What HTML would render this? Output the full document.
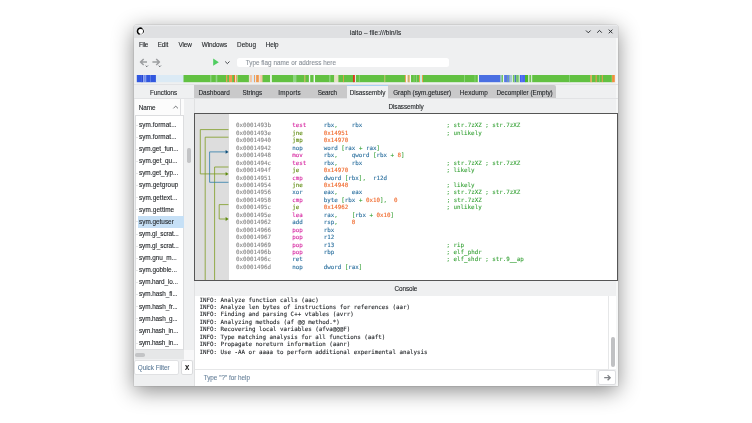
<!DOCTYPE html>
<html lang="en"><head><meta charset="utf-8"><title>iaito – file:///bin/ls</title>
<style>
html,body{margin:0;padding:0;background:#fff}
body{width:752px;height:423px;overflow:hidden;position:relative;font-family:"Liberation Sans",sans-serif}
.win{position:absolute;left:134px;top:25px;width:484px;height:361px;background:#eff0f1;border-radius:2px 2px 0 0;box-shadow:0 5px 21px rgba(0,0,0,.46),0 0 0 .5px rgba(0,0,0,.13)}
#root{position:absolute;left:0;top:0;width:752px;height:423px;will-change:transform}
.b{position:absolute;display:block}
.u{position:absolute;white-space:pre;line-height:1;font-family:"Liberation Sans",sans-serif;-webkit-text-stroke:.1px currentColor}
.m{position:absolute;white-space:pre;line-height:1;font-family:"DejaVu Sans Mono","Liberation Mono",monospace;font-size:5.84px;-webkit-text-stroke:.1px currentColor}
.s{position:absolute;display:block;top:75px;height:7.3px}
</style></head>
<body>
<div id="root">
<div class="win"></div>
<div class="b" style="left:134.00px;top:25.00px;width:484.00px;height:13.00px;background:linear-gradient(#e9eaec 0,#e9eaec 1px,#dfe0e2 1.6px);border-radius:2px 2px 0 0"></div>
<div class="b" style="left:616.00px;top:38.00px;width:2.00px;height:348.00px;background:#f6f7f7"></div>
<svg class="b" style="left:136px;top:27px" width="9" height="9" viewBox="0 0 9 9" fill="none"><circle cx="4.5" cy="4.2" r="3.9" fill="#f3f3f4"/><circle cx="4.5" cy="4.2" r="3" fill="#fff"/><path d="M6.03 1.56 A3.05 3.05 0 0 1 6.66 6.36" stroke="#111" stroke-width="0.95"/><path d="M6.66 6.36 A3.05 3.05 0 0 1 3.71 7.15" stroke="#777" stroke-width="0.6"/><path d="M6.03 1.56 A3.05 3.05 0 1 0 3.71 7.15" stroke="#050505" stroke-width="1.55"/></svg>
<div class="u" style="left:349.90px;top:30px;font-size:6.35px;letter-spacing:0.127px;color:#232629;">iaito – file:///bin/ls</div>
<svg class="b" style="left:583px;top:27px" width="34" height="10" viewBox="0 0 34 10" fill="none" stroke="#26292c" stroke-width="0.95"><path d="M3 3.5 L5.3 5.8 L7.6 3.5"/><path d="M14.2 5.7 L16.5 3.4 L18.8 5.7"/><path d="M25.75 2.6 L29.45 6.3 M29.45 2.6 L25.75 6.3"/></svg>
<div class="u" style="left:138.90px;top:42px;font-size:6.35px;letter-spacing:-0.258px;color:#232629;">File</div>
<div class="u" style="left:157.70px;top:42px;font-size:6.35px;letter-spacing:-0.086px;color:#232629;">Edit</div>
<div class="u" style="left:178.50px;top:42px;font-size:6.35px;letter-spacing:-0.112px;color:#232629;">View</div>
<div class="u" style="left:201.70px;top:42px;font-size:6.35px;letter-spacing:-0.037px;color:#232629;">Windows</div>
<div class="u" style="left:237.00px;top:42px;font-size:6.35px;letter-spacing:0.058px;color:#232629;">Debug</div>
<div class="u" style="left:265.70px;top:42px;font-size:6.35px;letter-spacing:-0.065px;color:#232629;">Help</div>
<svg class="b" style="left:137px;top:56px" width="100" height="14" viewBox="0 0 100 14" fill="none"><g stroke="#9c9ea0" stroke-width="1.55" stroke-linejoin="round"><path d="M3.6 6 H10 M6.7 3 L3.5 6 L6.7 9"/><path d="M15.4 6 H22.3 M19.2 3 L22.4 6 L19.2 9"/></g><g stroke="#3f4347" stroke-width="0.8"><path d="M8.7 9.6 L9.8 10.7 L10.9 9.6"/><path d="M21.7 9.6 L22.8 10.7 L23.9 9.6"/></g><path d="M76.2 2.6 L81.8 6.2 L76.2 9.8 Z" fill="#4fcd60"/><path d="M88.2 5.5 L90.35 7.65 L92.5 5.5" stroke="#3c4044" stroke-width="0.95"/></svg>
<div class="b" style="left:237.00px;top:57.50px;width:212.00px;height:9.50px;background:#fff;border-radius:2.5px"></div>
<div class="u" style="left:245.70px;top:60px;font-size:6.35px;letter-spacing:0.025px;color:#8a9199;">Type flag name or address here</div>
<svg class="b" style="left:130px;top:74px" width="492" height="10" viewBox="130 74 492 10">
<rect x="136.8" y="75" width="4.8" height="7.2" fill="#3157df"/>
<rect x="141.1" y="75" width="1.2" height="7.2" fill="#4a68e4"/>
<rect x="141.8" y="75" width="1.6" height="7.2" fill="#1c3cd0"/>
<rect x="142.9" y="75" width="2.0" height="7.2" fill="#93a9ef"/>
<rect x="144.4" y="75" width="1.4" height="7.2" fill="#5674e6"/>
<rect x="145.3" y="75" width="1.4" height="7.2" fill="#8ca3ee"/>
<rect x="146.2" y="75" width="4.3" height="7.2" fill="#3157df"/>
<rect x="150.0" y="75" width="1.2" height="7.2" fill="#6f8bea"/>
<rect x="150.7" y="75" width="5.7" height="7.2" fill="#3157df"/>
<rect x="155.9" y="75" width="28.1" height="7.2" fill="#dbeaf5"/>
<rect x="183.5" y="75" width="27.3" height="7.2" fill="#62c142"/>
<rect x="210.3" y="75" width="1.5" height="7.2" fill="#8fd582"/>
<rect x="211.3" y="75" width="4.9" height="7.2" fill="#62c142"/>
<rect x="215.7" y="75" width="2.0" height="7.2" fill="#8fd582"/>
<rect x="217.2" y="75" width="9.4" height="7.2" fill="#62c142"/>
<rect x="226.1" y="75" width="1.6" height="7.2" fill="#f0994f"/>
<rect x="227.2" y="75" width="2.3" height="7.2" fill="#62c142"/>
<rect x="229.0" y="75" width="3.7" height="7.2" fill="#f0994f"/>
<rect x="232.2" y="75" width="2.3" height="7.2" fill="#62c142"/>
<rect x="234.0" y="75" width="1.5" height="7.2" fill="#e8742a"/>
<rect x="235.0" y="75" width="1.5" height="7.2" fill="#f6d9c0"/>
<rect x="236.0" y="75" width="1.3" height="7.2" fill="#f0994f"/>
<rect x="236.8" y="75" width="1.3" height="7.2" fill="#bfe3b0"/>
<rect x="237.6" y="75" width="11.8" height="7.2" fill="#62c142"/>
<rect x="248.9" y="75" width="1.3" height="7.2" fill="#e6f0dc"/>
<rect x="249.7" y="75" width="2.7" height="7.2" fill="#f3c6a4"/>
<rect x="251.9" y="75" width="2.6" height="7.2" fill="#dbeaf5"/>
<rect x="254.0" y="75" width="1.4" height="7.2" fill="#f0994f"/>
<rect x="254.9" y="75" width="1.7" height="7.2" fill="#dbeaf5"/>
<rect x="256.1" y="75" width="3.2" height="7.2" fill="#f0994f"/>
<rect x="258.8" y="75" width="1.9" height="7.2" fill="#efe3d6"/>
<rect x="260.2" y="75" width="2.8" height="7.2" fill="#f3c6a4"/>
<rect x="262.5" y="75" width="8.0" height="7.2" fill="#62c142"/>
<rect x="270.0" y="75" width="2.4" height="7.2" fill="#e9f3e4"/>
<rect x="271.9" y="75" width="21.7" height="7.2" fill="#62c142"/>
<rect x="293.1" y="75" width="3.7" height="7.2" fill="#8fd582"/>
<rect x="296.3" y="75" width="8.2" height="7.2" fill="#62c142"/>
<rect x="304.0" y="75" width="2.0" height="7.2" fill="#b7bd62"/>
<rect x="305.5" y="75" width="3.9" height="7.2" fill="#62c142"/>
<rect x="308.9" y="75" width="1.8" height="7.2" fill="#f4f6f4"/>
<rect x="310.2" y="75" width="3.9" height="7.2" fill="#62c142"/>
<rect x="313.6" y="75" width="1.9" height="7.2" fill="#f4f6f4"/>
<rect x="315.0" y="75" width="14.8" height="7.2" fill="#62c142"/>
<rect x="329.3" y="75" width="1.6" height="7.2" fill="#8fd582"/>
<rect x="330.4" y="75" width="4.2" height="7.2" fill="#62c142"/>
<rect x="334.1" y="75" width="4.8" height="7.2" fill="#e6e2c6"/>
<rect x="338.4" y="75" width="5.1" height="7.2" fill="#62c142"/>
<rect x="343.0" y="75" width="1.3" height="7.2" fill="#f0994f"/>
<rect x="343.8" y="75" width="9.7" height="7.2" fill="#62c142"/>
<rect x="353.0" y="75" width="2.4" height="7.2" fill="#d8391c"/>
<rect x="354.9" y="75" width="1.6" height="7.2" fill="#dfeee0"/>
<rect x="356.0" y="75" width="3.4" height="7.2" fill="#62c142"/>
<rect x="358.9" y="75" width="1.3" height="7.2" fill="#8fd582"/>
<rect x="359.7" y="75" width="25.0" height="7.2" fill="#62c142"/>
<rect x="384.2" y="75" width="1.6" height="7.2" fill="#b7bd62"/>
<rect x="385.3" y="75" width="20.1" height="7.2" fill="#62c142"/>
<rect x="404.9" y="75" width="1.5" height="7.2" fill="#f0994f"/>
<rect x="405.9" y="75" width="2.2" height="7.2" fill="#f4f6f4"/>
<rect x="407.6" y="75" width="1.4" height="7.2" fill="#f0994f"/>
<rect x="408.5" y="75" width="1.1" height="7.2" fill="#8fd582"/>
<rect x="409.1" y="75" width="1.1" height="7.2" fill="#f0994f"/>
<rect x="409.7" y="75" width="1.8" height="7.2" fill="#f4f6f4"/>
<rect x="411.0" y="75" width="3.2" height="7.2" fill="#62c142"/>
<rect x="413.7" y="75" width="1.1" height="7.2" fill="#8fd582"/>
<rect x="414.3" y="75" width="2.5" height="7.2" fill="#62c142"/>
<rect x="416.3" y="75" width="1.1" height="7.2" fill="#8fd582"/>
<rect x="416.9" y="75" width="2.8" height="7.2" fill="#62c142"/>
<rect x="419.2" y="75" width="1.3" height="7.2" fill="#f0994f"/>
<rect x="420.0" y="75" width="2.5" height="7.2" fill="#c9efe0"/>
<rect x="422.0" y="75" width="1.5" height="7.2" fill="#f0994f"/>
<rect x="423.0" y="75" width="41.7" height="7.2" fill="#62c142"/>
<rect x="464.2" y="75" width="1.2" height="7.2" fill="#8fd582"/>
<rect x="464.9" y="75" width="10.2" height="7.2" fill="#62c142"/>
<rect x="474.6" y="75" width="1.2" height="7.2" fill="#8fd582"/>
<rect x="475.3" y="75" width="3.0" height="7.2" fill="#62c142"/>
<rect x="477.8" y="75" width="1.7" height="7.2" fill="#f4f6f4"/>
<rect x="479.0" y="75" width="21.7" height="7.2" fill="#4a6fe2"/>
<rect x="500.2" y="75" width="2.1" height="7.2" fill="#9cc0c8"/>
<rect x="501.8" y="75" width="1.7" height="7.2" fill="#70c858"/>
<rect x="503.0" y="75" width="1.6" height="7.2" fill="#eef4ee"/>
<rect x="504.1" y="75" width="3.3" height="7.2" fill="#5878e8"/>
<rect x="506.9" y="75" width="1.6" height="7.2" fill="#6a9ab0"/>
<rect x="508.0" y="75" width="1.7" height="7.2" fill="#6a80f0"/>
<rect x="509.2" y="75" width="1.3" height="7.2" fill="#86bfa6"/>
<rect x="510.0" y="75" width="2.5" height="7.2" fill="#a8c4d8"/>
<rect x="512.0" y="75" width="1.4" height="7.2" fill="#e8f2e8"/>
<rect x="512.9" y="75" width="1.8" height="7.2" fill="#70c850"/>
<rect x="514.2" y="75" width="0.9" height="7.2" fill="#bfe0c0"/>
<rect x="514.6" y="75" width="1.9" height="7.2" fill="#4a78c0"/>
<rect x="516.0" y="75" width="2.1" height="7.2" fill="#80c878"/>
<rect x="517.6" y="75" width="1.1" height="7.2" fill="#62b85a"/>
<rect x="518.2" y="75" width="1.7" height="7.2" fill="#8fd088"/>
<rect x="519.4" y="75" width="1.1" height="7.2" fill="#e4f0e6"/>
<rect x="520.0" y="75" width="2.0" height="7.2" fill="#4060f0"/>
<rect x="521.5" y="75" width="1.1" height="7.2" fill="#7088f0"/>
<rect x="522.1" y="75" width="3.4" height="7.2" fill="#4868f0"/>
<rect x="525.0" y="75" width="3.5" height="7.2" fill="#4cb92c"/>
<rect x="528.0" y="75" width="2.0" height="7.2" fill="#c8e8c0"/>
<rect x="529.5" y="75" width="1.9" height="7.2" fill="#62c142"/>
<rect x="530.9" y="75" width="1.8" height="7.2" fill="#d4ecd0"/>
<rect x="532.2" y="75" width="37.5" height="7.2" fill="#62c142"/>
<rect x="569.2" y="75" width="1.1" height="7.2" fill="#8fd582"/>
<rect x="569.8" y="75" width="21.0" height="7.2" fill="#62c142"/>
<rect x="590.3" y="75" width="1.1" height="7.2" fill="#f0994f"/>
<rect x="590.9" y="75" width="1.0" height="7.2" fill="#d9d28a"/>
<rect x="591.4" y="75" width="1.0" height="7.2" fill="#f0994f"/>
<rect x="591.9" y="75" width="4.2" height="7.2" fill="#62c142"/>
<rect x="595.6" y="75" width="1.6" height="7.2" fill="#f0994f"/>
<rect x="596.7" y="75" width="2.8" height="7.2" fill="#62c142"/>
<rect x="599.0" y="75" width="1.1" height="7.2" fill="#8fd582"/>
<rect x="599.6" y="75" width="2.7" height="7.2" fill="#62c142"/>
<rect x="601.8" y="75" width="1.5" height="7.2" fill="#f0994f"/>
<rect x="602.8" y="75" width="9.3" height="7.2" fill="#62c142"/>
<rect x="611.6" y="75" width="1.0" height="7.2" fill="#8fd582"/>
<rect x="612.1" y="75" width="2.7" height="7.2" fill="#f08f3c"/>
</svg>
<div class="b" style="left:134.00px;top:84.20px;width:484.00px;height:0.70px;background:#e2e3e5"></div>
<div class="b" style="left:134.00px;top:98.30px;width:484.00px;height:0.70px;background:#e2e3e5"></div>
<div class="u" style="left:149.90px;top:90px;font-size:6.35px;letter-spacing:-0.014px;color:#232629;">Functions</div>
<div class="b" style="left:135.30px;top:99.20px;width:44.90px;height:16.10px;background:#fcfcfc;border-right:0.7px solid #dcdddf"></div>
<div class="b" style="left:180.90px;top:99.20px;width:3.40px;height:16.10px;background:#fcfcfc"></div>
<div class="u" style="left:138.80px;top:105px;font-size:6.35px;letter-spacing:-0.060px;color:#232629;">Name</div>
<svg class="b" style="left:172px;top:104px" width="8" height="7" viewBox="0 0 8 7" fill="none" stroke="#3a3e42" stroke-width="0.7"><path d="M1.4 4.4 L3.7 2.1 L6 4.4"/></svg>
<div class="b" style="left:135.30px;top:115.40px;width:49.00px;height:234.50px;background:#fff;border:0.6px solid #dcdddf;box-sizing:border-box"></div>
<div class="b" style="left:138.00px;top:215.68px;width:46.00px;height:12.10px;background:#c6e0f6"></div>
<div class="b" style="left:136.30px;top:124.60px;width:1.30px;height:0.70px;background:#e6e7e8"></div>
<div class="u" style="left:139.00px;top:122px;font-size:6.4px;letter-spacing:0.055px;color:#232629;">sym.format...</div>
<div class="b" style="left:136.30px;top:136.71px;width:1.30px;height:0.70px;background:#e6e7e8"></div>
<div class="u" style="left:139.00px;top:134px;font-size:6.4px;letter-spacing:0.055px;color:#232629;">sym.format...</div>
<div class="b" style="left:136.30px;top:148.82px;width:1.30px;height:0.70px;background:#e6e7e8"></div>
<div class="u" style="left:139.00px;top:146px;font-size:6.4px;letter-spacing:-0.050px;color:#232629;">sym.get_fun...</div>
<div class="b" style="left:136.30px;top:160.93px;width:1.30px;height:0.70px;background:#e6e7e8"></div>
<div class="u" style="left:139.00px;top:158px;font-size:6.4px;letter-spacing:0.014px;color:#232629;">sym.get_qu...</div>
<div class="b" style="left:136.30px;top:173.04px;width:1.30px;height:0.70px;background:#e6e7e8"></div>
<div class="u" style="left:139.00px;top:170px;font-size:6.4px;letter-spacing:-0.046px;color:#232629;">sym.get_typ...</div>
<div class="b" style="left:136.30px;top:185.15px;width:1.30px;height:0.70px;background:#e6e7e8"></div>
<div class="u" style="left:139.00px;top:182px;font-size:6.4px;letter-spacing:0.060px;color:#232629;">sym.getgroup</div>
<div class="b" style="left:136.30px;top:197.26px;width:1.30px;height:0.70px;background:#e6e7e8"></div>
<div class="u" style="left:139.00px;top:195px;font-size:6.4px;letter-spacing:0.039px;color:#232629;">sym.gettext...</div>
<div class="b" style="left:136.30px;top:209.37px;width:1.30px;height:0.70px;background:#e6e7e8"></div>
<div class="u" style="left:139.00px;top:207px;font-size:6.4px;letter-spacing:0.073px;color:#232629;">sym.gettime</div>
<div class="b" style="left:136.30px;top:221.48px;width:1.30px;height:0.70px;background:#e6e7e8"></div>
<div class="u" style="left:139.00px;top:219px;font-size:6.4px;letter-spacing:-0.005px;color:#232629;">sym.getuser</div>
<div class="b" style="left:136.30px;top:233.59px;width:1.30px;height:0.70px;background:#e6e7e8"></div>
<div class="u" style="left:139.00px;top:231px;font-size:6.4px;letter-spacing:-0.104px;color:#232629;">sym.gl_scrat...</div>
<div class="b" style="left:136.30px;top:245.70px;width:1.30px;height:0.70px;background:#e6e7e8"></div>
<div class="u" style="left:139.00px;top:243px;font-size:6.4px;letter-spacing:-0.104px;color:#232629;">sym.gl_scrat...</div>
<div class="b" style="left:136.30px;top:257.81px;width:1.30px;height:0.70px;background:#e6e7e8"></div>
<div class="u" style="left:139.00px;top:255px;font-size:6.4px;letter-spacing:-0.059px;color:#232629;">sym.gnu_m...</div>
<div class="b" style="left:136.30px;top:269.92px;width:1.30px;height:0.70px;background:#e6e7e8"></div>
<div class="u" style="left:139.00px;top:267px;font-size:6.4px;letter-spacing:-0.005px;color:#232629;">sym.gobble...</div>
<div class="b" style="left:136.30px;top:282.03px;width:1.30px;height:0.70px;background:#e6e7e8"></div>
<div class="u" style="left:139.00px;top:279px;font-size:6.4px;letter-spacing:-0.092px;color:#232629;">sym.hard_lo...</div>
<div class="b" style="left:136.30px;top:294.14px;width:1.30px;height:0.70px;background:#e6e7e8"></div>
<div class="u" style="left:139.00px;top:291px;font-size:6.4px;letter-spacing:-0.063px;color:#232629;">sym.hash_fi...</div>
<div class="b" style="left:136.30px;top:306.25px;width:1.30px;height:0.70px;background:#e6e7e8"></div>
<div class="u" style="left:139.00px;top:304px;font-size:6.4px;letter-spacing:-0.088px;color:#232629;">sym.hash_fr...</div>
<div class="b" style="left:136.30px;top:318.36px;width:1.30px;height:0.70px;background:#e6e7e8"></div>
<div class="u" style="left:139.00px;top:316px;font-size:6.4px;letter-spacing:-0.095px;color:#232629;">sym.hash_g...</div>
<div class="b" style="left:136.30px;top:330.47px;width:1.30px;height:0.70px;background:#e6e7e8"></div>
<div class="u" style="left:139.00px;top:328px;font-size:6.4px;letter-spacing:-0.147px;color:#232629;">sym.hash_in...</div>
<div class="b" style="left:136.30px;top:342.58px;width:1.30px;height:0.70px;background:#e6e7e8"></div>
<div class="u" style="left:139.00px;top:340px;font-size:6.4px;letter-spacing:-0.147px;color:#232629;">sym.hash_in...</div>
<div class="b" style="left:187.40px;top:147.50px;width:3.40px;height:15.50px;background:#c3c4c6;border-radius:1.7px"></div>
<div class="b" style="left:135.20px;top:350.00px;width:49.10px;height:8.60px;background:#e6e7e8"></div>
<div class="b" style="left:184.30px;top:350.00px;width:10.30px;height:10.00px;background:#f8f8f9"></div>
<div class="b" style="left:135.30px;top:353.40px;width:9.30px;height:3.60px;background:#c3c4c6;border-radius:1.8px"></div>
<div class="b" style="left:133.50px;top:360.00px;width:45.70px;height:14.60px;background:#fff;border:0.6px solid #e0e1e3;border-radius:2px;box-sizing:border-box"></div>
<div class="u" style="left:137.80px;top:365px;font-size:6.35px;letter-spacing:-0.017px;color:#5f7d99;">Quick Filter</div>
<div class="b" style="left:180.60px;top:360.00px;width:12.50px;height:14.60px;background:#fff;border:0.6px solid #dadbdd;border-radius:2px;box-sizing:border-box"></div>
<div class="u" style="left:185.00px;top:365px;font-size:6.35px;letter-spacing:-0.335px;color:#111;font-weight:bold">X</div>
<div class="b" style="left:194.00px;top:99.00px;width:1.00px;height:287.00px;background:#e0e1e2"></div>
<div class="b" style="left:194.10px;top:85.30px;width:362.30px;height:13.00px;background:#c9c9ca;border-radius:0 2px 0 0"></div>
<div class="b" style="left:346.60px;top:85.00px;width:41.90px;height:14.00px;background:#eff0f1"></div>
<div class="b" style="left:346.60px;top:85.00px;width:41.90px;height:0.80px;background:#a9d1f1"></div>
<div class="u" style="left:198.50px;top:90px;font-size:6.35px;letter-spacing:0.026px;color:#232629;">Dashboard</div>
<div class="u" style="left:242.60px;top:90px;font-size:6.35px;letter-spacing:-0.009px;color:#232629;">Strings</div>
<div class="u" style="left:278.30px;top:90px;font-size:6.35px;letter-spacing:0.218px;color:#232629;">Imports</div>
<div class="u" style="left:317.70px;top:90px;font-size:6.35px;letter-spacing:-0.170px;color:#232629;">Search</div>
<div class="u" style="left:349.80px;top:90px;font-size:6.35px;letter-spacing:-0.045px;color:#232629;">Disassembly</div>
<div class="u" style="left:393.20px;top:90px;font-size:6.35px;letter-spacing:-0.007px;color:#232629;">Graph (sym.getuser)</div>
<div class="u" style="left:459.80px;top:90px;font-size:6.35px;letter-spacing:0.132px;color:#232629;">Hexdump</div>
<div class="u" style="left:496.40px;top:90px;font-size:6.35px;letter-spacing:0.017px;color:#232629;">Decompiler (Empty)</div>
<div class="u" style="left:388.50px;top:104px;font-size:6.35px;letter-spacing:-0.081px;color:#232629;">Disassembly</div>
<div class="b" style="left:194.20px;top:113.20px;width:423.70px;height:167.60px;background:#fff;border:0.9px solid #555;box-sizing:border-box"></div>
<div class="b" style="left:195.10px;top:114.10px;width:33.80px;height:165.80px;background:#dddddd"></div>
<svg class="b" style="left:195px;top:114px" width="34" height="166" viewBox="195 114 34 166" fill="none" stroke-width="0.8"><g stroke="#7d9c22"><path d="M228.5 129.6 H200.3 V173.9 H226"/><path d="M228.5 137.2 H205.2 V280"/><path d="M228.5 167 H214.6 V280"/><path d="M228.5 204.6 H219.2 V219 H226"/></g><path d="M228.5 182.3 H209.6 V151.9 H226" stroke="#2f7dab"/><path d="M225.6 172 L228.6 173.9 L225.6 175.8 Z" fill="#5e8a10" stroke="none"/><path d="M225.6 217.1 L228.6 219 L225.6 220.9 Z" fill="#5e8a10" stroke="none"/><path d="M225.6 150 L228.6 151.9 L225.6 153.8 Z" fill="#10507a" stroke="none"/></svg>
<div class="m" style="left:236px;top:123px"><span style="color:#868686">0x0001493b</span>      <span style="color:#d6249f">test</span>     <span style="color:#2a6f9e">rbx</span><span style="color:#3aa33a">,</span>    <span style="color:#2a6f9e">rbx</span>                        <span style="color:#3aa33a">; str.7zXZ ; str.7zXZ</span></div>
<div class="m" style="left:236px;top:131px"><span style="color:#868686">0x0001493e</span>      <span style="color:#5d8a0c">jne</span>      <span style="color:#f0682a">0x14951</span>                            <span style="color:#3aa33a">; unlikely</span></div>
<div class="m" style="left:236px;top:138px"><span style="color:#868686">0x00014940</span>      <span style="color:#5d8a0c">jmp</span>      <span style="color:#f0682a">0x14970</span></div>
<div class="m" style="left:236px;top:146px"><span style="color:#868686">0x00014942</span>      <span style="color:#2a6f9e">nop</span>      <span style="color:#2a6f9e">word</span> <span style="color:#3aa33a">[</span><span style="color:#2a6f9e">rax</span> <span style="color:#3aa33a">+</span> <span style="color:#2a6f9e">rax</span><span style="color:#3aa33a">]</span></div>
<div class="m" style="left:236px;top:153px"><span style="color:#868686">0x00014948</span>      <span style="color:#d6249f">mov</span>      <span style="color:#2a6f9e">rbx</span><span style="color:#3aa33a">,</span>    <span style="color:#2a6f9e">qword</span> <span style="color:#3aa33a">[</span><span style="color:#2a6f9e">rbx</span> <span style="color:#3aa33a">+</span> <span style="color:#f0682a">8</span><span style="color:#3aa33a">]</span></div>
<div class="m" style="left:236px;top:161px"><span style="color:#868686">0x0001494c</span>      <span style="color:#d6249f">test</span>     <span style="color:#2a6f9e">rbx</span><span style="color:#3aa33a">,</span>    <span style="color:#2a6f9e">rbx</span>                        <span style="color:#3aa33a">; str.7zXZ ; str.7zXZ</span></div>
<div class="m" style="left:236px;top:168px"><span style="color:#868686">0x0001494f</span>      <span style="color:#5d8a0c">je</span>       <span style="color:#f0682a">0x14970</span>                            <span style="color:#3aa33a">; likely</span></div>
<div class="m" style="left:236px;top:176px"><span style="color:#868686">0x00014951</span>      <span style="color:#d6249f">cmp</span>      <span style="color:#2a6f9e">dword</span> <span style="color:#3aa33a">[</span><span style="color:#2a6f9e">rbx</span><span style="color:#3aa33a">]</span><span style="color:#3aa33a">,</span>  <span style="color:#2a6f9e">r12d</span></div>
<div class="m" style="left:236px;top:183px"><span style="color:#868686">0x00014954</span>      <span style="color:#5d8a0c">jne</span>      <span style="color:#f0682a">0x14948</span>                            <span style="color:#3aa33a">; likely</span></div>
<div class="m" style="left:236px;top:190px"><span style="color:#868686">0x00014956</span>      <span style="color:#2a6f9e">xor</span>      <span style="color:#2a6f9e">eax</span><span style="color:#3aa33a">,</span>    <span style="color:#2a6f9e">eax</span>                        <span style="color:#3aa33a">; str.7zXZ ; str.7zXZ</span></div>
<div class="m" style="left:236px;top:198px"><span style="color:#868686">0x00014958</span>      <span style="color:#d6249f">cmp</span>      <span style="color:#2a6f9e">byte</span> <span style="color:#3aa33a">[</span><span style="color:#2a6f9e">rbx</span> <span style="color:#3aa33a">+</span> <span style="color:#f0682a">0x10</span><span style="color:#3aa33a">]</span><span style="color:#3aa33a">,</span>  <span style="color:#f0682a">0</span>              <span style="color:#3aa33a">; str.7zXZ</span></div>
<div class="m" style="left:236px;top:205px"><span style="color:#868686">0x0001495c</span>      <span style="color:#5d8a0c">je</span>       <span style="color:#f0682a">0x14962</span>                            <span style="color:#3aa33a">; unlikely</span></div>
<div class="m" style="left:236px;top:213px"><span style="color:#868686">0x0001495e</span>      <span style="color:#d6249f">lea</span>      <span style="color:#2a6f9e">rax</span><span style="color:#3aa33a">,</span>    <span style="color:#3aa33a">[</span><span style="color:#2a6f9e">rbx</span> <span style="color:#3aa33a">+</span> <span style="color:#f0682a">0x10</span><span style="color:#3aa33a">]</span></div>
<div class="m" style="left:236px;top:220px"><span style="color:#868686">0x00014962</span>      <span style="color:#2a6f9e">add</span>      <span style="color:#2a6f9e">rsp</span><span style="color:#3aa33a">,</span>    <span style="color:#f0682a">8</span></div>
<div class="m" style="left:236px;top:228px"><span style="color:#868686">0x00014966</span>      <span style="color:#d6249f">pop</span>      <span style="color:#2a6f9e">rbx</span></div>
<div class="m" style="left:236px;top:235px"><span style="color:#868686">0x00014967</span>      <span style="color:#d6249f">pop</span>      <span style="color:#2a6f9e">r12</span></div>
<div class="m" style="left:236px;top:243px"><span style="color:#868686">0x00014969</span>      <span style="color:#d6249f">pop</span>      <span style="color:#2a6f9e">r13</span>                                <span style="color:#3aa33a">; rip</span></div>
<div class="m" style="left:236px;top:250px"><span style="color:#868686">0x0001496b</span>      <span style="color:#d6249f">pop</span>      <span style="color:#2a6f9e">rbp</span>                                <span style="color:#3aa33a">; elf_phdr</span></div>
<div class="m" style="left:236px;top:257px"><span style="color:#868686">0x0001496c</span>      <span style="color:#2a6f9e">ret</span>                                         <span style="color:#3aa33a">; elf_shdr ; str.9__ap</span></div>
<div class="m" style="left:236px;top:265px"><span style="color:#868686">0x0001496d</span>      <span style="color:#2a6f9e">nop</span>      <span style="color:#2a6f9e">dword</span> <span style="color:#3aa33a">[</span><span style="color:#2a6f9e">rax</span><span style="color:#3aa33a">]</span></div>
<div class="u" style="left:394.50px;top:286px;font-size:6.35px;letter-spacing:-0.071px;color:#232629;">Console</div>
<div class="b" style="left:195.30px;top:295.50px;width:420.70px;height:73.90px;background:#fff"></div>
<div class="b" style="left:195.30px;top:369.40px;width:413.70px;height:0.70px;background:#e6e7e8"></div>
<div class="b" style="left:195.30px;top:370.10px;width:401.20px;height:15.90px;background:#fff"></div>
<div class="b" style="left:608.40px;top:295.50px;width:0.60px;height:73.90px;background:#e6e7e8"></div>
<div class="b" style="left:611.00px;top:337.40px;width:3.80px;height:30.10px;background:#c0c1c3;border-radius:1.9px"></div>
<div class="m" style="left:199.4px;top:298px;color:#232629">INFO: Analyze function calls (aac)</div>
<div class="m" style="left:199.4px;top:305px;color:#232629">INFO: Analyze len bytes of instructions for references (aar)</div>
<div class="m" style="left:199.4px;top:312px;color:#232629">INFO: Finding and parsing C++ vtables (avrr)</div>
<div class="m" style="left:199.4px;top:320px;color:#232629">INFO: Analyzing methods (af @@ method.*)</div>
<div class="m" style="left:199.4px;top:327px;color:#232629">INFO: Recovering local variables (afva@@@F)</div>
<div class="m" style="left:199.4px;top:335px;color:#232629">INFO: Type matching analysis for all functions (aaft)</div>
<div class="m" style="left:199.4px;top:342px;color:#232629">INFO: Propagate noreturn information (aanr)</div>
<div class="m" style="left:199.4px;top:350px;color:#232629">INFO: Use -AA or aaaa to perform additional experimental analysis</div>
<div class="u" style="left:203.70px;top:375px;font-size:6.35px;letter-spacing:-0.013px;color:#6a849c;">Type "?" for help</div>
<div class="b" style="left:598.00px;top:370.40px;width:18.40px;height:14.30px;background:#fff;border:0.6px solid #dcdde0;border-radius:2px;box-sizing:border-box"></div>
<svg class="b" style="left:602px;top:373px" width="11" height="10" viewBox="0 0 11 10" fill="none" stroke="#808387" stroke-width="1.3"><path d="M2.2 4.7 H8 M5.6 2.1 L8.2 4.7 L5.6 7.3"/></svg>
</div>
</body></html>
